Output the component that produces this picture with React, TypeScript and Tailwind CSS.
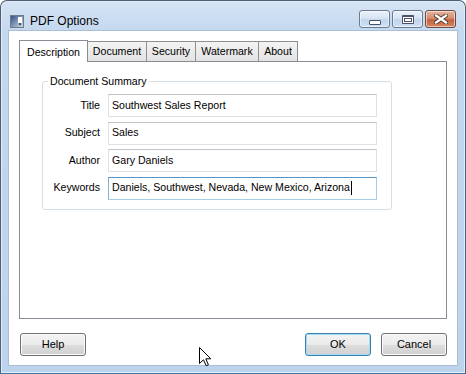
import React from "react"

const fields = [
  { label: "Title", value: "Southwest Sales Report" },
  { label: "Subject", value: "Sales" },
  { label: "Author", value: "Gary Daniels" },
  { label: "Keywords", value: "Daniels, Southwest, Nevada, New Mexico, Arizona", focused: true },
]

const tabs = [
  { name: "Description", w: "w-[69px]", active: true },
  { name: "Document", w: "w-[60px]" },
  { name: "Security", w: "w-[50px]" },
  { name: "Watermark", w: "w-[64px]" },
  { name: "About", w: "w-[40px]" },
]

function CaptionButton({ kind }: { kind: "min" | "max" | "close" }) {
  const base =
    "flex h-[18px] w-[31px] items-center justify-center rounded-[3px] border shadow-[inset_0_0_0_1px_rgba(255,255,255,0.55)]"
  if (kind === "close") {
    return (
      <div
        className={`${base} border-[#6b4a44] bg-[linear-gradient(to_bottom,#e6b49c_0%,#d58f6e_45%,#c0623f_55%,#d7865f_100%)]`}
      >
        <svg width="14" height="10" viewBox="0 0 14 10">
          <path d="M2 1.5 L12 8.5 M12 1.5 L2 8.5" stroke="#5a3f3a" strokeWidth="4.2" strokeLinecap="square" />
          <path d="M2 1.5 L12 8.5 M12 1.5 L2 8.5" stroke="#ffffff" strokeWidth="2.2" strokeLinecap="square" />
        </svg>
      </div>
    )
  }
  return (
    <div
      className={`${base} border-[#6a7a90] bg-[linear-gradient(to_bottom,#eaf1fa_0%,#d7e4f4_45%,#c1d5ed_55%,#cfe0f4_100%)]`}
    >
      {kind === "min" ? (
        <div className="mt-[7px] h-[5px] w-[12px] rounded-[1px] border border-[#4b4f6a] bg-white" />
      ) : (
        <div className="h-[9px] w-[12px] rounded-[1px] border border-[#4b4f6a] border-t-2 bg-white p-[1px]">
          <div className="h-full w-full border border-[#4b4f6a] bg-white" />
        </div>
      )}
    </div>
  )
}

function Button({ label, primary }: { label: string; primary?: boolean }) {
  return (
    <div
      className={`flex h-[23px] w-[66px] items-center justify-center rounded-[3px] border bg-[linear-gradient(to_bottom,#f3f3f3_0%,#ebebeb_50%,#dddddd_50%,#d1d1d1_100%)] text-[11px] font-normal text-black ${
        primary
          ? "border-[#3c7fb1] shadow-[inset_0_0_0_1px_#9fdcf6]"
          : "border-[#707070] shadow-[inset_0_0_0_1px_#fbfbfb]"
      }`}
    >
      {label}
    </div>
  )
}

export default function App() {
  return (
    <div className="relative flex h-[374px] w-[466px] flex-col overflow-hidden rounded-t-[7px] border border-[#4e5e74] border-b-[#3b7a9e] bg-[linear-gradient(to_bottom,#d6e4f4_0%,#c4d8ef_30px,#bdd3ec_100%)] font-['Liberation_Sans',Arial,sans-serif] shadow-[inset_0_0_0_1px_#e2edf9]">
      {/* Title bar */}
      <div className="flex h-[29px] items-start px-[9px]">
        <div className="mt-[11px] flex items-center gap-[6px]">
          <svg width="14" height="13" viewBox="0 0 14 13">
            <defs>
              <linearGradient id="ic" x1="0" y1="0" x2="1" y2="1">
                <stop offset="0" stopColor="#2f4f7e" />
                <stop offset="1" stopColor="#d3dde9" />
              </linearGradient>
            </defs>
            <rect x="0.5" y="0.5" width="13" height="12" fill="url(#ic)" stroke="#6c7b8e" />
            <rect x="8" y="2" width="4" height="6" fill="#ffffff" />
            <rect x="9" y="8" width="2" height="2" fill="#3d4f68" />
          </svg>
          <span className="text-[12px] text-black">PDF Options</span>
        </div>
        <div className="flex-1" />
        <div className="mt-[9px] flex gap-[2px]">
          <CaptionButton kind="min" />
          <CaptionButton kind="max" />
          <CaptionButton kind="close" />
        </div>
      </div>

      {/* Client area */}
      <div className="mx-[7px] mb-[7px] flex flex-1 flex-col border border-[#a9bdd4] bg-white px-[10px] pt-[9px] text-[10.6px] text-black">
        {/* Tabs */}
        <div className="flex items-end">
          {tabs.map((t) =>
            t.active ? (
              <div
                key={t.name}
                className={`relative z-10 -mb-px flex h-[22px] ${t.w} items-start justify-center border border-b-0 border-[#898c95] bg-white pt-[4px]`}
              >
                {t.name}
              </div>
            ) : (
              <div
                key={t.name}
                className={`-ml-px flex h-[20px] ${t.w} items-center justify-center border border-b-0 border-[#8e8f8f] bg-[linear-gradient(to_bottom,#f4f4f4,#e2e2e2)] pt-[1px] first:ml-0`}
              >
                {t.name}
              </div>
            ),
          )}
        </div>

        {/* Panel */}
        <div className="h-[258px] border border-[#898c95] bg-white px-[22px] pt-[13px]">
          <fieldset className="m-0 w-[350px] rounded-[3px] border border-[#d5dfe5] p-0 pb-[9px]">
            <legend className="ml-[5px] px-[2px] leading-[13px] text-black">Document Summary</legend>
            <div className="mt-[6px] grid grid-cols-[57px_269px] gap-x-[8px] gap-y-[4.6px]">
              {fields.map((f) => (
                <React.Fragment key={f.label}>
                  <div className="flex h-[23px] items-center justify-end">{f.label}</div>
                  <div
                    className={`flex h-[23px] items-center border px-[3px] ${
                      f.focused
                        ? "border-[#a5cde6] border-t-[#5594c4] border-l-[#7eb4dc]"
                        : "border-[#dde1e5] border-t-[#c0c4c9]"
                    }`}
                  >
                    <span className="whitespace-nowrap">{f.value}</span>
                    {f.focused && <span className="ml-px h-[14px] w-px bg-black" />}
                  </div>
                </React.Fragment>
              ))}
            </div>
          </fieldset>
        </div>

        {/* Buttons */}
        <div className="mt-[14px] flex items-center">
          <div className="ml-px">
            <Button label="Help" />
          </div>
          <div className="flex-1" />
          <div className="flex gap-[10px]">
            <Button label="OK" primary />
            <Button label="Cancel" />
          </div>
        </div>
      </div>

      {/* Mouse pointer */}
      <svg className="absolute left-[198px] top-[346px]" width="13" height="20" viewBox="0 0 13 20">
        <path
          d="M0.5 0.5 L0.5 16.5 L4.5 12.8 L7.2 18.8 L9.4 17.8 L6.8 11.8 L11.8 11.8 Z"
          fill="#ffffff"
          stroke="#000000"
          strokeWidth="1"
          strokeLinejoin="miter"
        />
      </svg>
    </div>
  )
}
